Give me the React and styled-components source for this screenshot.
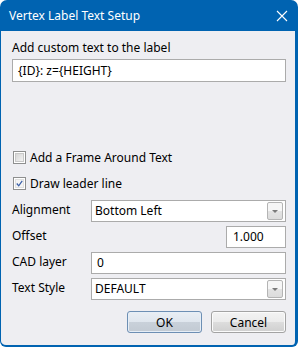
import React from 'react'
import styled, { createGlobalStyle } from 'styled-components'

const Global = createGlobalStyle`
  html, body { margin: 0; padding: 0; background: #ffffff; }
  #root { width: 298px; height: 347px; }
  * { box-sizing: border-box; }
`;

const Window = styled.div`
  width: 298px;
  height: 347px;
  display: flex;
  flex-direction: column;
  font-family: "Noto Sans", "Liberation Sans", sans-serif;
  font-size: 12px;
  color: #000;
`;

const TitleBar = styled.div`
  height: 31px;
  flex: none;
  background: #0063b1;
  border-radius: 7px 7px 0 0;
  display: flex;
  align-items: center;
  justify-content: space-between;
  padding: 0 9px 0 9px;
  color: #fff;
  font-size: 12px;
`;

const CloseIcon = styled.svg`
  width: 12px;
  height: 12px;
  margin-right: 1px;
`;

const Body = styled.div`
  flex: 1;
  background: #eeeef2;
  border-left: 1px solid #0063b1;
  border-right: 3px solid #0063b1;
  border-bottom: 2px solid #0063b1;
  border-radius: 0 0 6px 6px;
  padding: 9px 9px 0 11px;
  display: flex;
  flex-direction: column;
`;

const Caption = styled.div`
  line-height: 16px;
  height: 16px;
`;

const Field = styled.div`
  height: ${p => p.$h || 22}px;
  width: ${p => (p.$w ? `${p.$w}px` : '100%')};
  justify-self: ${p => (p.$end ? 'end' : 'stretch')};
  background: #fff;
  border: 1px solid #ababab;
  display: flex;
  align-items: center;
  padding: 0 2px 0 ${p => p.$pad || 3}px;
  line-height: 16px;
`;

const Checks = styled.div`
  margin-top: 67px;
  display: flex;
  flex-direction: column;
  gap: 10px;
`;

const CheckRow = styled.label`
  display: flex;
  align-items: center;
  gap: 4px;
  height: 16px;
  padding-left: 1px;
`;

const Box = styled.span`
  width: 13px;
  height: 13px;
  border: 1px solid #8e8f8f;
  background: #fff;
  display: flex;
  align-items: center;
  justify-content: center;
  padding: 1px;
`;

const BoxInner = styled.span`
  width: 100%;
  height: 100%;
  background: ${p => (p.$checked ? '#f4f4f4' : 'linear-gradient(135deg, #d6d6d6, #f2f2f2)')};
  border: 1px solid ${p => (p.$checked ? '#e0e0e0' : '#c8c8c8')};
  display: flex;
  align-items: center;
  justify-content: center;
`;

const Form = styled.div`
  margin-top: 9px;
  display: grid;
  grid-template-columns: 79px 1fr;
  row-gap: 4px;
  align-items: center;
`;

const RowLabel = styled.div`
  line-height: 16px;
  margin-top: -2px;
`;

const DropButton = styled.span`
  margin-left: auto;
  width: 16px;
  height: 18px;
  border: 1px solid #b4b4b4;
  border-radius: 2px;
  background: linear-gradient(#f6f6f6, #f6f6f6 50%, #e3e3e3 51%, #dcdcdc);
  display: flex;
  align-items: center;
  justify-content: center;
`;

const Arrow = styled.span`
  width: 0;
  height: 0;
  border-left: 3px solid transparent;
  border-right: 3px solid transparent;
  border-top: 3px solid #7a7a7a;
`;

const Buttons = styled.div`
  margin-top: 11px;
  display: flex;
  justify-content: flex-end;
  gap: 9px;
`;

const Button = styled.button`
  width: 75px;
  height: 22px;
  font-family: inherit;
  font-size: 12px;
  color: #000;
  padding: 0;
  border-radius: 3px;
  border: 1px solid ${p => (p.$default ? '#6d8fb4' : '#a3a3a3')};
  box-shadow: inset 0 0 0 1px ${p => (p.$default ? '#e6eef7' : '#fbfbfb')};
  background: ${p =>
    p.$default
      ? 'linear-gradient(#e9eef4, #dfe6ee 50%, #c9d1da 51%, #c2cad3)'
      : 'linear-gradient(#f3f3f3, #ebebeb 50%, #dddddd 51%, #cfcfcf)'};
`;

function Check({ checked, children }) {
  return (
    <CheckRow>
      <Box>
        <BoxInner $checked={checked}>
          {checked && (
            <svg width="9" height="9" viewBox="0 0 9 9">
              <path d="M1 4.5 L3.5 7.5 L8 1" fill="none" stroke="#3a5fa8" strokeWidth="1.6" />
            </svg>
          )}
        </BoxInner>
      </Box>
      {children}
    </CheckRow>
  );
}

function Combo({ children }) {
  return (
    <Field $h={22} $pad={3}>
      {children}
      <DropButton><Arrow /></DropButton>
    </Field>
  );
}

export default function App() {
  return (
    <Window>
      <Global />
      <TitleBar>
        Vertex Label Text Setup
        <CloseIcon viewBox="0 0 12 12">
          <path d="M1 1 L11 11 M11 1 L1 11" stroke="#fff" strokeWidth="1.1" />
        </CloseIcon>
      </TitleBar>
      <Body>
        <Caption>Add custom text to the label</Caption>
        <Field $h={23} style={{ marginTop: 3 }} $pad={5}>{'{ID}: z={HEIGHT}'}</Field>

        <Checks>
          <Check>Add a Frame Around Text</Check>
          <Check checked>Draw leader line</Check>
        </Checks>

        <Form>
          <RowLabel>Alignment</RowLabel>
          <Combo>Bottom Left</Combo>

          <RowLabel>Offset</RowLabel>
          <Field $w={60} $end $pad={6}>1.000</Field>

          <RowLabel>CAD layer</RowLabel>
          <Field $pad={5}>0</Field>

          <RowLabel>Text Style</RowLabel>
          <Combo>DEFAULT</Combo>
        </Form>

        <Buttons>
          <Button $default>OK</Button>
          <Button>Cancel</Button>
        </Buttons>
      </Body>
    </Window>
  );
}
